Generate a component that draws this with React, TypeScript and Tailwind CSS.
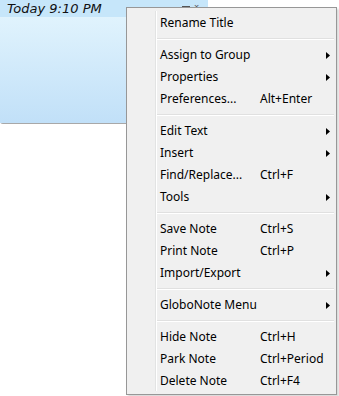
import React from "react";

type Item = { label: string; shortcut?: string; sub?: boolean } | "sep";

const items: Item[] = [
  { label: "Rename Title" },
  "sep",
  { label: "Assign to Group", sub: true },
  { label: "Properties", sub: true },
  { label: "Preferences...", shortcut: "Alt+Enter" },
  "sep",
  { label: "Edit Text", sub: true },
  { label: "Insert", sub: true },
  { label: "Find/Replace...", shortcut: "Ctrl+F" },
  { label: "Tools", sub: true },
  "sep",
  { label: "Save Note", shortcut: "Ctrl+S" },
  { label: "Print Note", shortcut: "Ctrl+P" },
  { label: "Import/Export", sub: true },
  "sep",
  { label: "GloboNote Menu", sub: true },
  "sep",
  { label: "Hide Note", shortcut: "Ctrl+H" },
  { label: "Park Note", shortcut: "Ctrl+Period" },
  { label: "Delete Note", shortcut: "Ctrl+F4" },
];

function Arrow() {
  return (
    <svg width="4" height="7" viewBox="0 0 4 7" className="block">
      <path d="M0 0 L4 3.5 L0 7 Z" fill="#000" />
    </svg>
  );
}

export default function App() {
  return (
    <div
      className="relative w-[339px] h-[396px] bg-white overflow-hidden"
      style={{ fontFamily: '"Noto Sans", "Open Sans", sans-serif' }}
    >
      {/* Note */}
      <div className="w-[208px] h-[124px] flex flex-col border-b border-[#a8a8a8] rounded-bl-[3px]">
        <div className="h-[17px] bg-[#c6e6fa] flex items-center pl-[7px] relative">
          <span
            className="text-[13px] leading-none italic text-[#111]"
            style={{ fontFamily: '"DejaVu Sans", sans-serif', fontStyle: "italic" }}
          >
            Today 9:10 PM
          </span>
          <div className="absolute left-[182px] top-[6px] w-[8px] h-[1px] bg-[#555]" />
          <div className="absolute left-[194px] top-[2px] text-[9px] leading-none text-[#555]">×</div>
        </div>
        <div className="flex-1 bg-gradient-to-b from-[#e0f3fd] to-[#c1e0f8]" />
      </div>

      {/* Context menu */}
      <div className="absolute left-[126px] top-[7px] w-[211px] border border-[#979797] bg-[#f0f0f0] pt-[4px] pb-[2px] shadow-[2px_2px_2px_rgba(0,0,0,0.15)]">
        <div className="absolute left-[28px] top-[3px] bottom-[3px] w-[2px] border-l border-[#e2e3e3] bg-[#f0f0f0]">
          <div className="w-[1px] h-full bg-white" />
        </div>
        {items.map((it, i) =>
          it === "sep" ? (
            <div key={i} className="h-[10px] flex flex-col justify-center pl-[30px] pr-[2px]">
              <div className="h-[1px] bg-[#e0e0e0]" />
              <div className="h-[1px] bg-white" />
            </div>
          ) : (
            <div
              key={i}
              className="relative h-[22px] flex items-center pl-[33px] text-[12px] text-black"
            >
              <span className="w-[100px] whitespace-nowrap">{it.label}</span>
              {it.shortcut && <span className="whitespace-nowrap">{it.shortcut}</span>}
              {it.sub && (
                <span className="absolute right-[6px] top-[8px]">
                  <Arrow />
                </span>
              )}
            </div>
          )
        )}
      </div>
    </div>
  );
}
